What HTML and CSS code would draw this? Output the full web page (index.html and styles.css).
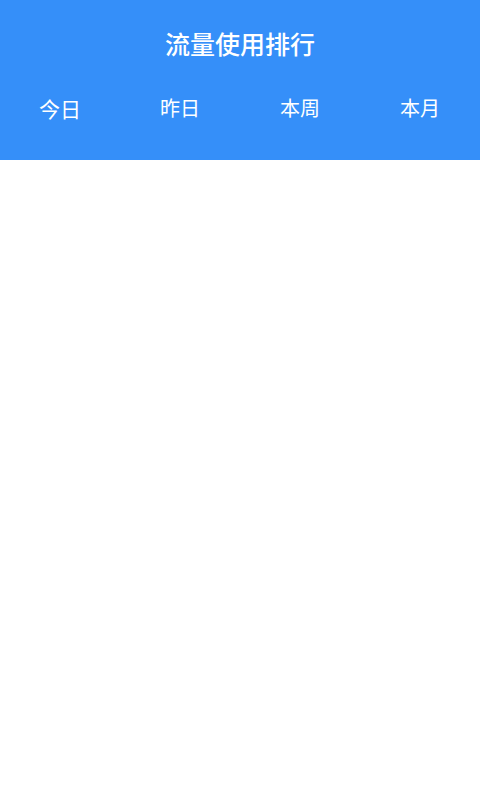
FILE: index.html
```html
<!DOCTYPE html>
<html lang="zh">
<head>
<meta charset="utf-8">
<title>流量使用排行</title>
<link rel="stylesheet" href="styles.css">
</head>
<body>
<header class="header">
  <h1 class="title">流量使用排行</h1>
  <nav class="tabs">
    <div class="tab tab-active">今日</div>
    <div class="tab">昨日</div>
    <div class="tab">本周</div>
    <div class="tab">本月</div>
  </nav>
</header>
<main class="content"></main>
</body>
</html>
```
FILE: styles.css
```css
html, body {
  margin: 0;
  padding: 0;
  background: #ffffff;
  font-family: "Noto Sans CJK SC", "Noto Sans", sans-serif;
}
.header {
  background: #358ff9;
  height: 160px;
  display: flex;
  flex-direction: column;
  color: #ffffff;
}
.title {
  margin: 0;
  height: 86px;
  display: flex;
  align-items: center;
  justify-content: center;
  font-size: 25px;
  font-weight: 500;
  letter-spacing: 0;
}
.tabs {
  display: grid;
  grid-template-columns: repeat(4, 1fr);
  height: 44px;
  align-items: center;
}
.tab {
  text-align: center;
  font-size: 20px;
  line-height: 44px;
}
.tab-active {
  font-size: 21px;
}
.content {
  height: 640px;
  background: #ffffff;
}
```
